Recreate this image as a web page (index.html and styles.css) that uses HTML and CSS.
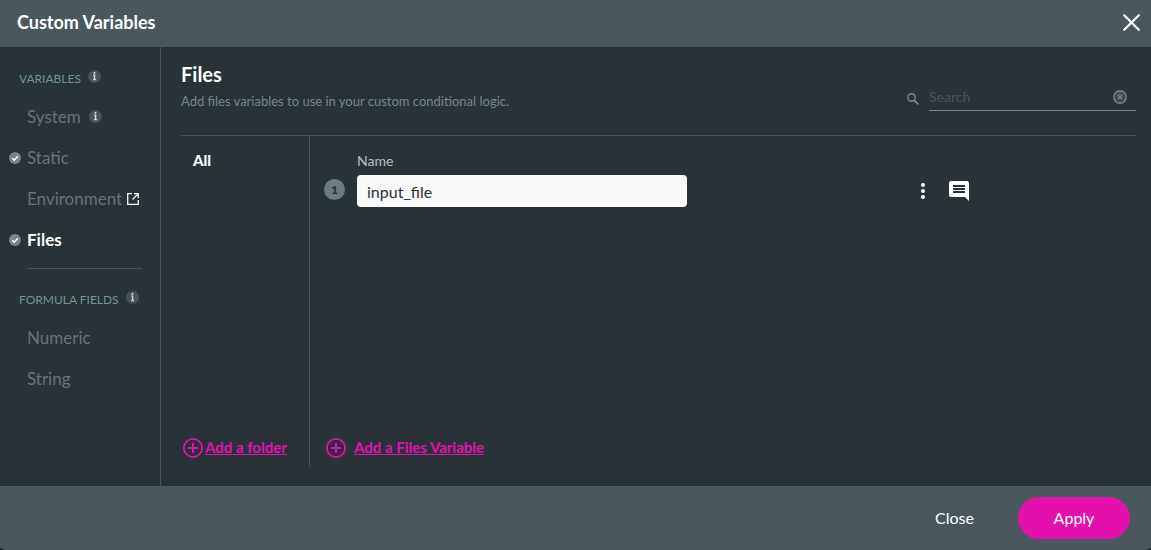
FILE: index.html
```html
<!DOCTYPE html>
<html lang="en">
<head>
<meta charset="utf-8">
<title>Custom Variables</title>
<link rel="stylesheet" href="styles.css">
</head>
<body>
<svg class="sprite" aria-hidden="true">
  <symbol id="info" viewBox="0 0 13 13"><circle cx="6.500" cy="6.500" r="6.500" fill="#485257"/><path d="M5.600 2h1.700v1.700H5.600zM5 4.600h2.300v4.700h.9v1H5v-1h.8V5.600H5z" fill="#d8dcdd"/></symbol>
  <symbol id="check" viewBox="0 0 12 12"><circle cx="6" cy="6" r="6" fill="#77868b"/><path d="M3.200 6.200l2 2 3.700-3.900" fill="none" stroke="#fff" stroke-width="1.500"/></symbol>
  <symbol id="plus" viewBox="0 0 20 20"><circle cx="10" cy="10" r="9.100" fill="none" stroke="currentColor" stroke-width="1.800"/><path d="M10 5v10M5 10h10" stroke="currentColor" stroke-width="2"/></symbol>
</svg>
<div class="dialog" role="dialog" aria-labelledby="dialog-title">
  <header class="dialog-header">
    <h1 id="dialog-title" class="dialog-title">Custom Variables</h1>
    <button class="icon-button" type="button" aria-label="Close dialog">
      <svg width="17" height="17" viewBox="0 0 17 17"><path d="M1.200 1.200l14.600 14.600M15.800 1.200L1.200 15.800" stroke="#fff" stroke-width="2.200" stroke-linecap="round"/></svg>
    </button>
  </header>
  <div class="dialog-body">
    <nav class="sidebar">
      <h2 class="group-title">VARIABLES <svg class="info-icon"><use href="#info"/></svg></h2>
      <ul class="nav-list">
        <li class="nav-item"><span class="nav-mark"></span><a class="nav-link" href="#system">System</a><svg class="info-icon nav-info"><use href="#info"/></svg></li>
        <li class="nav-item"><span class="nav-mark"><svg class="check-icon"><use href="#check"/></svg></span><a class="nav-link" href="#static">Static</a></li>
        <li class="nav-item"><span class="nav-mark"></span><a class="nav-link" href="#environment">Environment</a><svg class="external-icon" viewBox="0 0 12 12"><path d="M5 .7H.7v10.600h10.600V7M7 .7h4.300V5M11.300.7L5.500 6.500" fill="none" stroke="#f2f3f3" stroke-width="1.300"/></svg></li>
        <li class="nav-item"><span class="nav-mark"><svg class="check-icon"><use href="#check"/></svg></span><a class="nav-link active" href="#files" aria-current="page">Files</a></li>
      </ul>
      <hr class="nav-rule">
      <h2 class="group-title">FORMULA FIELDS <svg class="info-icon"><use href="#info"/></svg></h2>
      <ul class="nav-list">
        <li class="nav-item"><span class="nav-mark"></span><a class="nav-link" href="#numeric">Numeric</a></li>
        <li class="nav-item"><span class="nav-mark"></span><a class="nav-link" href="#string">String</a></li>
      </ul>
    </nav>
    <main class="content">
      <div class="content-header">
        <div>
          <h2 class="content-title">Files</h2>
          <p class="content-text">Add files variables to use in your custom conditional logic.</p>
        </div>
        <div class="search">
          <label class="search-label" for="search" aria-label="Search"><svg width="12" height="12" viewBox="0 0 12 12" fill="none" stroke="#77868b"><circle cx="4.500" cy="4.500" r="3.700" stroke-width="1.500"/><path d="M7.300 7.300l4 4" stroke-width="1.800"/></svg></label>
          <div class="search-field">
            <input class="search-input" id="search" type="text" placeholder="Search">
            <button class="icon-button" type="button" aria-label="Clear search"><svg width="14" height="14" viewBox="0 0 14 14" stroke="#77868b"><circle cx="7" cy="7" r="6.200" fill="#434e53" stroke-width="1.400"/><path d="M5 5l4 4M9 5L5 9" stroke-width="1.400"/></svg></button>
          </div>
        </div>
      </div>
      <div class="panes">
        <section class="folders">
          <button class="folder" type="button">All</button>
          <a class="add-link" href="#add-folder"><svg class="plus-icon"><use href="#plus"/></svg><span class="add-text">Add a folder</span></a>
        </section>
        <section class="variables">
          <div class="variable">
            <span class="badge">1</span>
            <div class="field">
              <label class="field-label" for="name">Name</label>
              <input class="field-input" id="name" type="text" value="input_file">
            </div>
            <div class="actions">
              <button class="icon-button" type="button" aria-label="More"><svg width="4" height="16" viewBox="0 0 4 16" fill="#fff"><circle cx="2" cy="2" r="2"/><circle cx="2" cy="8" r="2"/><circle cx="2" cy="14" r="2"/></svg></button>
              <button class="icon-button" type="button" aria-label="Comment"><svg width="20" height="20" viewBox="0 0 20 20"><path d="M2 0h16a2 2 0 0 1 2 2v18l-4-4H2a2 2 0 0 1-2-2V2a2 2 0 0 1 2-2z" fill="#fff"/><path d="M4 5h12M4 8h12M4 11h12" stroke="#283237" stroke-width="2"/></svg></button>
            </div>
          </div>
          <a class="add-link wide" href="#add-variable"><svg class="plus-icon"><use href="#plus"/></svg><span class="add-text">Add a Files Variable</span></a>
        </section>
      </div>
    </main>
  </div>
  <footer class="dialog-footer">
    <button class="button" type="button">Close</button>
    <button class="button primary" type="button">Apply</button>
  </footer>
</div>
</body>
</html>
```

FILE: styles.css
```css
* { box-sizing: border-box; }
body {
  margin: 0;
  background: #0c1013;
  color: #fff;
  font-family: Lato, sans-serif;
}
h1, h2, p, ul { margin: 0; padding: 0; }
ul { list-style: none; }
svg { display: block; flex: none; }
button, input { font: inherit; color: inherit; background: none; border: 0; padding: 0; }
button { cursor: pointer; }
a { color: inherit; }
.sprite { display: none; }

.dialog {
  display: flex;
  flex-direction: column;
  min-height: 100vh;
  background: #283237;
  border-radius: 0 0 6px 6px / 0 0 3px 3px;
  overflow: hidden;
}
.dialog-header {
  display: flex;
  align-items: center;
  justify-content: space-between;
  height: 47px;
  padding: 0 11px 2px 17px;
  background: #4a585e;
}
.dialog-title { padding-bottom: 2px; font-size: 18px; line-height: 24px; }
.icon-button { display: block; flex: none; }
.dialog-body { display: flex; flex: 1; }

.sidebar {
  flex: none;
  width: 161px;
  padding-top: 20px;
  border-right: 1px solid #485257;
}
.group-title {
  display: flex;
  gap: 7px;
  padding-left: 19px;
  color: #76958d;
  font-size: 12px;
  font-weight: 400;
  line-height: 24px;
}
.info-icon { width: 13px; height: 13px; margin-top: 3px; }
.nav-info { margin: 0 0 0 8px; }
.nav-list { padding: 5px 0 0 9px; }
.nav-item { display: flex; align-items: center; height: 41px; }
.nav-mark { width: 18px; flex: none; }
.check-icon { width: 12px; height: 12px; }
.nav-link {
  color: #6b7175;
  font-size: 17px;
  line-height: 24px;
  text-decoration: none;
}
.nav-link.active { color: #fff; font-weight: 700; }
.external-icon { width: 12px; height: 12px; margin-left: 5px; }
.nav-rule {
  height: 1px;
  margin: 8px 18px 19px 27px;
  border: 0;
  background: #485257;
}

.content {
  display: flex;
  flex: 1;
  flex-direction: column;
  min-width: 0;
  padding: 15px 15px 20px 20px;
}
.content-header {
  display: flex;
  justify-content: space-between;
  height: 73px;
}
.content-title { font-size: 20px; line-height: 24px; }
.content-text { margin-top: 5px; color: #77868b; font-size: 13px; line-height: 20px; }
.search { display: flex; gap: 10px; width: 229px; padding-top: 21px; }
.search-label { padding-top: 10px; }
.search-field {
  display: flex;
  flex: 1;
  align-items: center;
  height: 28px;
  padding-right: 9px;
  border-bottom: 1px solid #77868b;
}
.search-input { flex: 1; min-width: 0; font-size: 14px; outline: 0; }
.search-input::placeholder { color: #485257; opacity: 1; }

.panes { display: flex; flex: 1; border-top: 1px solid #485257; }
.folders, .variables {
  display: flex;
  flex-direction: column;
  align-items: flex-start;
  justify-content: space-between;
  padding-bottom: 8px;
}
.folders { flex: none; width: 129px; padding-top: 14px; border-right: 1px solid #485257; }
.variables { flex: 1; padding-top: 15px; }
.folder { padding-left: 12px; font-size: 15px; font-weight: 900; line-height: 20px; }
.add-link {
  display: flex;
  align-items: center;
  margin-left: 2px;
  color: #e310ad;
  font-size: 15px;
  font-weight: 700;
  line-height: 18px;
  text-decoration: none;
  gap: 2px;
}
.add-link.wide { margin-left: 16px; gap: 8px; }
.add-text { padding-bottom: 2px; text-decoration: underline; }
.plus-icon { width: 20px; height: 20px; }
.variable { display: flex; align-items: flex-end; width: 100%; padding-left: 14px; }
.badge {
  flex: none;
  width: 21px;
  height: 21px;
  margin: 0 12px 7px 0;
  border-radius: 50%;
  background: #6c7c81;
  color: #283237;
  font-size: 12px;
  font-weight: 900;
  line-height: 21px;
  text-align: center;
}
.field { flex: 0 1 330px; }
.field-label { display: block; color: #bcc0c2; font-size: 14px; line-height: 20px; }
.field-input {
  display: block;
  width: 100%;
  height: 32px;
  margin-top: 4px;
  padding: 0 10px;
  border-radius: 4px;
  background: #fafafa;
  color: #283237;
  font-size: 16px;
}
.actions {
  display: flex;
  flex: 1;
  align-items: center;
  justify-content: flex-end;
  gap: 24px;
  height: 32px;
  padding-right: 167px;
}

.dialog-footer {
  display: flex;
  align-items: center;
  justify-content: flex-end;
  gap: 44px;
  height: 64px;
  padding-right: 21px;
  background: #4a585e;
}
.button { font-size: 16px; line-height: 42px; }
.button.primary { width: 112px; border-radius: 21px; background: #e310ad; }
```
